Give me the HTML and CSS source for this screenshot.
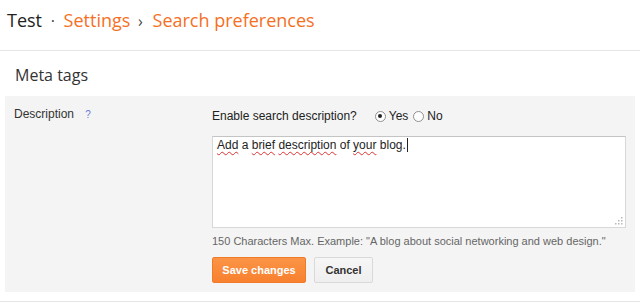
FILE: index.html
```
<!DOCTYPE html>
<html lang="en">
<head>
  <meta charset="UTF-8">
  <title>Search preferences</title>
  <link rel="stylesheet" href="styles.css">
</head>
<body>
  <header class="crumbs">
    <span class="blog">Test</span>
    <span class="sep">&middot;</span>
    <a class="crumb">Settings</a>
    <span class="sep arrow">&rsaquo;</span>
    <a class="crumb">Search preferences</a>
  </header>

  <h3 class="section-title">Meta tags</h3>

  <div class="panel">
    <div class="label">Description <span class="help">?</span></div>
    <div class="field">
      <div class="enable-row">
        <span class="question">Enable search description?</span>
        <label class="radio"><span class="dot checked"></span>Yes</label>
        <label class="radio"><span class="dot"></span>No</label>
      </div>

      <div class="textbox">
        <span class="typo">Add</span> a <span class="typo">brief</span> <span class="typo">description</span> of <span class="typo">your</span> blog.<span class="caret"></span>
        <svg class="grip" width="8" height="8" viewBox="0 0 8 8">
          <rect x="6" y="0" width="1.5" height="1.5" fill="#b8b8b8"/>
          <rect x="3" y="3" width="1.5" height="1.5" fill="#b8b8b8"/>
          <rect x="6" y="3" width="1.5" height="1.5" fill="#b8b8b8"/>
          <rect x="0" y="6" width="1.5" height="1.5" fill="#b8b8b8"/>
          <rect x="3" y="6" width="1.5" height="1.5" fill="#b8b8b8"/>
          <rect x="6" y="6" width="1.5" height="1.5" fill="#b8b8b8"/>
        </svg>
      </div>

      <div class="hint">150 Characters Max. Example: "A blog about social networking and web design."</div>

      <div class="buttons">
        <button class="btn save">Save changes</button>
        <button class="btn cancel">Cancel</button>
      </div>
    </div>
  </div>

  <div class="bottom-rule"></div>
</body>
</html>
```

FILE: styles.css
```
body {
  margin: 0;
  background: #fff;
  font-family: "Liberation Sans", Arial, sans-serif;
  color: #333;
  width: 640px;
  overflow: hidden;
}

/* Breadcrumb header */
.crumbs {
  height: 51px;
  box-sizing: border-box;
  padding: 6px 0 0 7px;
  border-bottom: 1px solid #e5e5e5;
  font-family: "Open Sans", sans-serif;
  font-size: 18px;
  line-height: 28px;
  white-space: nowrap;
}
.crumbs .blog { color: #222; }
.crumbs .sep { color: #444; font-size: 16px; margin: 0 4px; }
.crumbs .sep.arrow { margin: 0 5px 0 3px; }
.crumbs .crumb { color: #f5701f; }

.section-title {
  margin: 0;
  height: 45px;
  box-sizing: border-box;
  padding: 13px 0 0 15px;
  font-family: "Open Sans", sans-serif;
  font-weight: normal;
  font-size: 16px;
  line-height: 22px;
  color: #333;
}

/* Grey settings panel */
.panel {
  margin: 0 5px;
  background: #f4f4f4;
  display: flex;
  padding: 9px 9px 9px 0;
}
.label {
  width: 207px;
  flex: none;
  box-sizing: border-box;
  padding: 2px 0 0 9px;
  font-size: 12px;
  line-height: 14px;
  color: #333;
}
.help {
  color: #6a7bd6;
  font-size: 10px;
  margin-left: 8px;
}
.field { flex: 1; }

.enable-row {
  display: flex;
  align-items: center;
  height: 20px;
  margin-top: 1px;
  font-size: 12px;
  color: #222;
}
.question { margin-right: 18px; }
.radio { display: flex; align-items: center; margin-right: 5px; }
.dot {
  width: 9px;
  height: 9px;
  border: 1px solid #8f8f8f;
  border-radius: 50%;
  background: #fff;
  margin-right: 3px;
  position: relative;
}
.dot.checked::after {
  content: "";
  position: absolute;
  left: 2.5px;
  top: 2.5px;
  width: 4px;
  height: 4px;
  border-radius: 50%;
  background: #222;
}

.textbox {
  margin-top: 10px;
  height: 92px;
  box-sizing: border-box;
  border: 1px solid #d8d8d8;
  border-top-color: #c4c4c4;
  background: #fff;
  padding: 1px 4px;
  font-size: 12px;
  line-height: 14px;
  color: #222;
  position: relative;
}
.typo {
  text-decoration: underline wavy #e03030;
  text-decoration-thickness: 1px;
  text-underline-offset: 2px;
}
.caret {
  display: inline-block;
  width: 1px;
  height: 14px;
  background: #222;
  vertical-align: top;
  margin-left: 1px;
}
.grip { position: absolute; right: 2px; bottom: 2px; }

.hint {
  margin-top: 6px;
  font-size: 11px;
  line-height: 14px;
  color: #666;
}

.buttons { display: flex; gap: 8px; margin-top: 9px; }
.btn {
  height: 26px;
  box-sizing: border-box;
  font-family: "Liberation Sans", Arial, sans-serif;
  font-size: 11px;
  font-weight: bold;
  border-radius: 2px;
  padding: 0;
  cursor: pointer;
}
.save {
  width: 94px;
  background: linear-gradient(#fb9446, #f7812f);
  border: 1px solid #f27b2a;
  color: #fff;
}
.cancel {
  width: 59px;
  background: linear-gradient(#f6f6f6, #efefef);
  border: 1px solid #d9d9d9;
  color: #333;
}

.bottom-rule {
  margin-top: 9px;
  border-top: 1px solid #e5e5e5;
}
```
